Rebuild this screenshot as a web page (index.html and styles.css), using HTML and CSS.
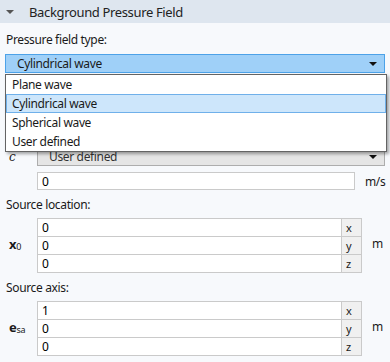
FILE: index.html
```html
<!DOCTYPE html>
<html lang="en">
<head>
  <meta charset="UTF-8">
  <title>Background Pressure Field</title>
  <link rel="stylesheet" href="styles.css">
</head>
<body>
  <div class="section-header">
    <span class="caret"></span>
    <span class="section-title">Background Pressure Field</span>
  </div>

  <div class="section-body">
    <div class="label">Pressure field type:</div>
    <div class="combo-wrap">
      <div class="combo active">
        <span>Cylindrical wave</span>
        <span class="arrow"></span>
      </div>
      <ul class="dropdown">
        <li>Plane wave</li>
        <li class="selected">Cylindrical wave</li>
        <li>Spherical wave</li>
        <li>User defined</li>
      </ul>
    </div>

    <div class="row row-c">
      <span class="sym italic">c</span>
      <div class="combo disabled">
        <span>User defined</span>
        <span class="arrow"></span>
      </div>
    </div>

    <div class="row">
      <span class="sym"></span>
      <input class="field field-speed" type="text" value="0">
      <span class="unit">m/s</span>
    </div>

    <div class="label spaced">Source location:</div>
    <div class="row">
      <span class="sym bold">x<sub>0</sub></span>
      <div class="vector">
        <input class="field" type="text" value="0"><span class="axis">x</span>
        <input class="field" type="text" value="0"><span class="axis">y</span>
        <input class="field" type="text" value="0"><span class="axis">z</span>
      </div>
      <span class="unit">m</span>
    </div>

    <div class="label spaced">Source axis:</div>
    <div class="row">
      <span class="sym bold">e<sub>sa</sub></span>
      <div class="vector">
        <input class="field" type="text" value="1"><span class="axis">x</span>
        <input class="field" type="text" value="0"><span class="axis">y</span>
        <input class="field" type="text" value="0"><span class="axis">z</span>
      </div>
      <span class="unit">m</span>
    </div>
  </div>
</body>
</html>
```

FILE: styles.css
```css
body {
  margin: 0;
  background: #f7f9fc;
  font-family: "Noto Sans", sans-serif;
  font-size: 12px;
  letter-spacing: -0.35px;
  color: #1a1a1a;
}

.section-header {
  height: 23px;
  background: #dee6ef;
  display: flex;
  align-items: center;
}

.caret {
  width: 0;
  height: 0;
  margin-left: 6px;
  border-left: 4px solid transparent;
  border-right: 4px solid transparent;
  border-top: 4px solid #555;
}

.section-title {
  margin-left: 15px;
  font-size: 13px;
  color: #222;
}

.section-body {
  padding: 8px 0 0 5px;
}

.label {
  height: 18px;
  line-height: 18px;
  padding-left: 1px;
}

.label.spaced {
  margin-top: 6px;
}

.combo-wrap {
  position: relative;
  margin-top: 5px;
}

.combo {
  height: 17px;
  border: 1px solid #adadad;
  display: flex;
  align-items: center;
  justify-content: space-between;
  padding: 0 7px 0 11px;
}

.combo.active {
  width: 360px;
  background: #9fd0f8;
  border-color: #4da2e8;
}

.combo.disabled {
  width: 328px;
  background: #e5e5e5;
  color: #333;
}

.arrow {
  width: 0;
  height: 0;
  border-left: 4px solid transparent;
  border-right: 4px solid transparent;
  border-top: 4px solid #111;
}

.dropdown {
  position: absolute;
  top: 20px;
  left: 0;
  width: 380px;
  margin: 0;
  padding: 0;
  list-style: none;
  background: #fff;
  border: 1px solid #646464;
  box-shadow: 2px 2px 3px rgba(0, 0, 0, 0.35);
  z-index: 2;
}

.dropdown li {
  height: 17px;
  line-height: 17px;
  padding-left: 5px;
  border: 1px solid transparent;
}

.dropdown li.selected {
  background: #cde6fb;
  border-color: #6fb0ea;
}

.row {
  display: flex;
  align-items: center;
}

.row-c {
  margin-top: 74px;
}

.row + .row {
  margin-top: 6px;
}

.sym {
  width: 32px;
  padding-left: 4px;
  box-sizing: border-box;
}

.italic {
  font-style: italic;
  font-family: "DejaVu Serif", serif;
}

.bold {
  font-weight: bold;
  font-size: 13px;
}

.bold sub {
  font-size: 9px;
  font-weight: normal;
  vertical-align: -1px;
}

.field {
  height: 18px;
  box-sizing: border-box;
  border: 1px solid #cacaca;
  background: #fff;
  font: inherit;
  padding: 0 4px;
  margin: 0;
  outline: none;
}

.field-speed {
  width: 318px;
}

.unit {
  margin-left: 10px;
}

.vector {
  display: grid;
  grid-template-columns: 305px 20px;
  grid-template-rows: 18px 18px 18px;
  margin: 4px 0 1px;
}

.vector .field {
  width: 100%;
  height: 19px;
}

.axis {
  height: 19px;
  box-sizing: border-box;
  border: 1px solid #cacaca;
  border-left: none;
  background: #f0f0f0;
  padding-left: 4px;
  line-height: 17px;
  font-size: 11px;
}
```
